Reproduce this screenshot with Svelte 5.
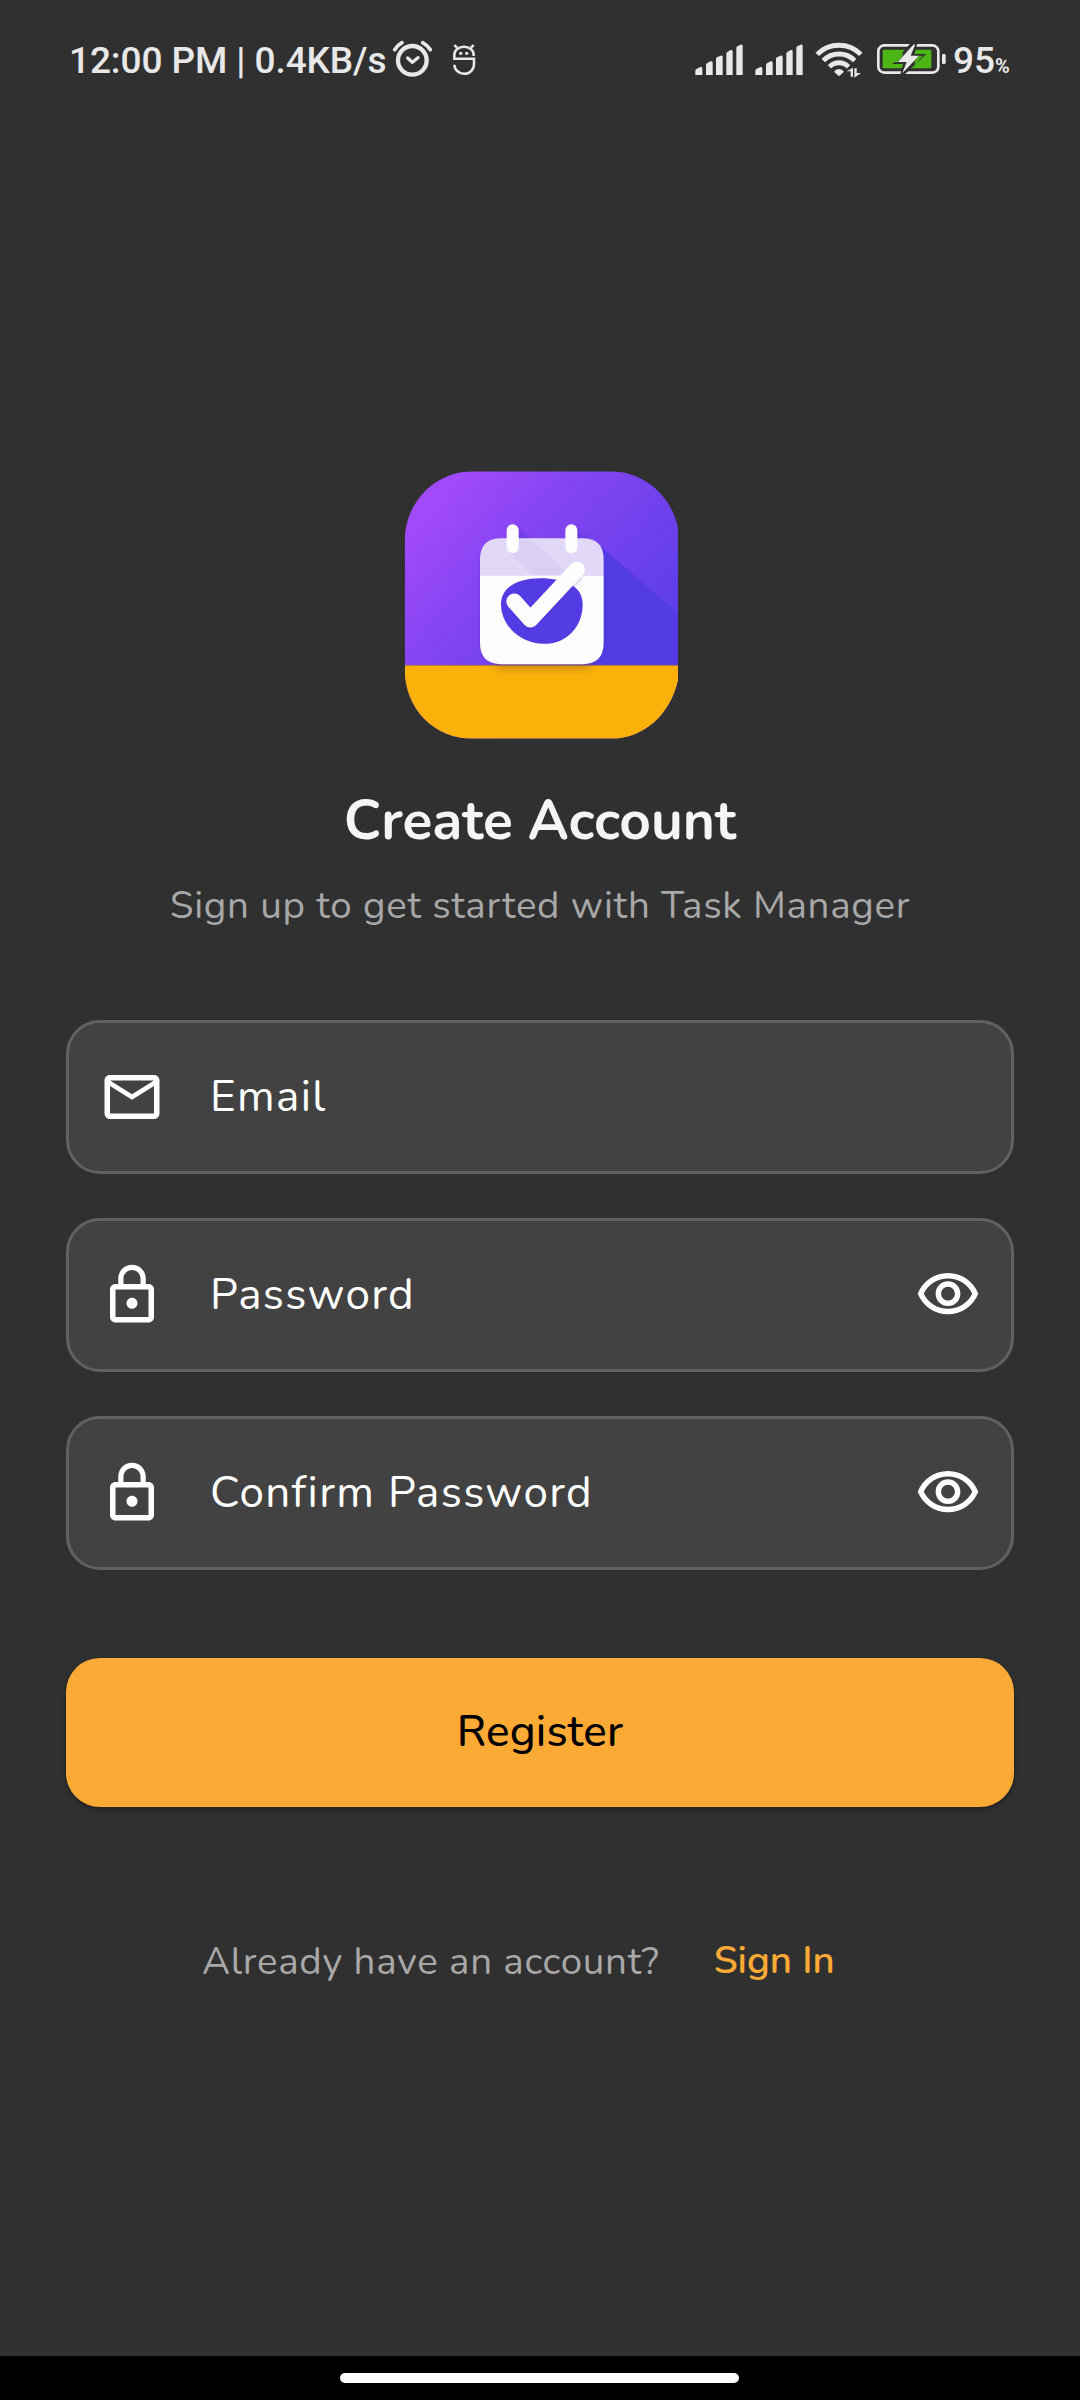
<script>
  const fields = [
    { label: 'Email', icon: 'mail', secret: false },
    { label: 'Password', icon: 'lock', secret: true },
    { label: 'Confirm Password', icon: 'lock', secret: true },
  ];

  const icons = {
    mail: 'M22 6c0-1.1-.9-2-2-2H4c-1.1 0-2 .9-2 2v12c0 1.1.9 2 2 2h16c1.1 0 2-.9 2-2V6zm-2 0l-8 5-8-5h16zm0 12H4V8l8 5 8-5v10z',
    lock: 'M12 17c1.1 0 2-.9 2-2s-.9-2-2-2-2 .9-2 2 .9 2 2 2zm6-9h-1V6c0-2.76-2.24-5-5-5S7 3.24 7 6v2H6c-1.1 0-2 .9-2 2v10c0 1.1.9 2 2 2h12c1.1 0 2-.9 2-2V10c0-1.1-.9-2-2-2zM8.9 6c0-1.71 1.39-3.1 3.1-3.1s3.1 1.39 3.1 3.1v2H8.9V6zM18 20H6V10h12v10z',
    eye: 'M12 6c3.79 0 7.17 2.13 8.82 5.5C19.17 14.87 15.79 17 12 17s-7.17-2.13-8.82-5.5C4.83 8.13 8.21 6 12 6m0-2C7 4 2.73 7.11 1 11.5 2.73 15.89 7 19 12 19s9.27-3.11 11-7.5C21.27 7.11 17 4 12 4zm0 5c1.38 0 2.5 1.12 2.5 2.5S13.38 14 12 14s-2.5-1.12-2.5-2.5S10.62 9 12 9m0-2c-2.48 0-4.5 2.02-4.5 4.5S9.52 16 12 16s4.5-2.02 4.5-4.5S14.48 7 12 7z',
  };
</script>

{#snippet signal()}
  <svg class="signal" viewBox="45 66 147 102">
    <path d="M46 165v-13q0-3 3-5l12-6q6-1 6 4v20zM78 165v-30q0-3 3-5l11-6q6-1 6 4v37zM108 165v-48q0-3 3-5l11-5q6-1 6 4v54zM139 165v-64q0-3 3-5l10-6q6-1 6 4v71zM169 165v-81q0-3 3-5l10-5q6-1 6 4v87z" />
  </svg>
{/snippet}

<div class="screen">
  <header class="status">
    <span class="clock">12:00 PM | 0.4KB/s</span>
    <svg class="alarm" viewBox="1026 60 126 114">
      <g fill="none" stroke="#e8e8e8" stroke-linecap="round" stroke-linejoin="round">
        <circle cx="1087" cy="121" r="43" stroke-width="13" />
        <path d="M1034 89q8-13 22-21M1118 68q14 8 23 21" stroke-width="11" />
        <path d="M1073 114l14 13 17-14" stroke-width="10" />
      </g>
    </svg>
    <svg class="buddy" viewBox="216 38 72 98">
      <path d="M281 77v-4a29 24 0 0 0-58 0v12h59v16a29 28 0 0 1-59 2M223 44l8 8M281 44l-8 8" fill="none" stroke="#e8e8e8" stroke-width="7.500" />
      <circle cx="242" cy="69" r="5" />
      <circle cx="260" cy="69" r="5" />
    </svg>
    <div class="system">
      {@render signal()}
      {@render signal()}
      <svg class="wifi" viewBox="405 66 144 108">
        <g fill="none" stroke="#e8e8e8" stroke-width="14.500">
          <path d="M411.5 103.2A92 92 0 0 1 542.500 103.200" />
          <path d="M430 122A65.500 65.500 0 0 1 524 122" />
          <path d="M448.500 140.500A39.500 39.500 0 0 1 505.500 140.500" />
        </g>
        <path d="M463 154q14-14 28 0v2l-12 11q-2 1-4 0l-12-11z" />
        <path d="M519 143v27h-7v-16h-12zM523 173v-28h7v14h13z" />
      </svg>
      <svg class="battery" viewBox="588 66 213 102">
        <rect x="595" y="76" width="180" height="82" rx="18" fill="none" stroke="#e8e8e8" stroke-width="8" />
        <rect x="608" y="89" width="146" height="56" rx="4" fill="#4db516" />
        <path d="M698 70l-50 57h27l-9 37 60-57h-29l10-37z" fill="#303030" stroke="#303030" stroke-width="10" />
        <path d="M640 127l28-30v30zM728 107h-24v28z" fill="#4db516" />
        <path d="M699 75l-45 51h26l-13 34 50-53h-25l14-34z" stroke="#303030" stroke-width="3" />
        <path d="M699 75l-45 51h26l-13 34 50-53h-25l14-34z" />
        <rect x="786" y="102" width="11" height="30" rx="4" />
      </svg>
      <span class="level">95<small>%</small></span>
    </div>
  </header>

  <main>
    <svg class="logo" viewBox="42 33 822 803">
      <defs>
        <linearGradient id="sky" gradientUnits="userSpaceOnUse" x1="100" y1="190" x2="640" y2="650">
          <stop offset="0" stop-color="#a04afa" />
          <stop offset="0.35" stop-color="#8545f1" />
          <stop offset="0.75" stop-color="#6e41ec" />
          <stop offset="1" stop-color="#603fe9" />
        </linearGradient>
        <clipPath id="tile">
          <path d="M250 33H660C760 33 845 105 864 205V660C840 765 760 836 660 836H250C135 836 44 750 44 625V245C44 125 135 33 250 33Z" />
        </clipPath>
        <filter id="soft" x="-30%" y="-30%" width="160%" height="160%">
          <feGaussianBlur stdDeviation="12" />
        </filter>
        <filter id="haze" x="-30%" y="-30%" width="160%" height="160%">
          <feGaussianBlur stdDeviation="5" />
        </filter>
      </defs>
      <g clip-path="url(#tile)">
        <rect x="44" y="33" width="820" height="803" fill="url(#sky)" />
        <path d="M632 258L870 465V616H600z" fill="#523ce2" />
        <path d="M382 200l50 50h-60zM558 202l60 50h-62z" fill="#5a37d6" opacity="0.5" filter="url(#haze)" />
        <rect x="44" y="616" width="820" height="220" fill="#fbb10a" />
        <rect x="44" y="614" width="820" height="3" fill="#a8784a" />
        <rect x="310" y="560" width="300" height="66" rx="30" fill="#7a4a20" opacity="0.4" filter="url(#soft)" />
        <rect x="268" y="248" width="376" height="362" rx="60" fill="#3c23b0" opacity="0.22" filter="url(#haze)" />
      </g>
      <path d="M270 346V298q0-64 64-64H577q64 0 64 64V346z" fill="#e2d8f7" />
      <path d="M352 270l76 76h112l-112-106h-42z" fill="#d3c6ee" opacity="0.4" />
      <path d="M270 345H641V548q0 64-64 64H334q-64 0-64-64z" fill="#fdfdfe" />
      <path d="M333 432C333 380 385 354 450 354C530 354 578 380 578 432C578 500 530 551 462 551C390 551 333 495 333 432Z" fill="#543ce4" />
      <path d="M376 434l46 54 143-148" fill="none" stroke="#3a2a90" stroke-width="36" opacity="0.2" filter="url(#haze)" />
      <path d="M373 424L421 478L561 328" fill="none" stroke="#fdfdfe" stroke-width="48" stroke-linecap="round" stroke-linejoin="round" />
      <rect x="350" y="192" width="36" height="87" rx="18" fill="#fdfdfe" />
      <rect x="526" y="192" width="36" height="87" rx="18" fill="#fdfdfe" />
    </svg>

    <h1>Create Account</h1>
    <p class="lead">Sign up to get started with Task Manager</p>

    <form>
      {#each fields as field}
        <div class="field">
          <svg class="glyph" viewBox="0 0 24 24"><path d={icons[field.icon]} /></svg>
          <span class="label">{field.label}</span>
          {#if field.secret}
            <svg class="glyph" viewBox="0 0 24 24"><path d={icons.eye} /></svg>
          {/if}
        </div>
      {/each}
      <button type="button">Register</button>
    </form>

    <div class="switch">
      <span>Already have an account?</span>
      <span class="signin">Sign In</span>
    </div>
  </main>

  <footer><div class="pill"></div></footer>
</div>

<style>
  :global(body) {
    margin: 0;
    background: #303030;
  }
  .screen {
    width: 1080px;
    height: 2400px;
    display: flex;
    flex-direction: column;
    background: #303030;
    font-family: Nunito, Lato, sans-serif;
    overflow: hidden;
  }
  svg {
    display: block;
    flex: none;
  }

  .status {
    box-sizing: border-box;
    height: 120px;
    flex: none;
    display: flex;
    align-items: flex-start;
    padding: 38px 69px 0 69px;
    color: #e8e8e8;
    font: 500 37px/44px Roboto, sans-serif;
  }
  .status svg {
    fill: #e8e8e8;
  }
  .clock {
    width: 323px;
    margin-top: 1px;
    letter-spacing: -0.1px;
    white-space: nowrap;
  }
  .alarm {
    width: 42px;
    height: 38px;
    margin-top: 2px;
  }
  .buddy {
    width: 24px;
    height: 32.7px;
    margin: 5px 0 0 18px;
  }
  .system {
    display: flex;
    align-items: flex-start;
    margin-left: auto;
  }
  .system svg {
    margin-top: 4px;
  }
  .signal {
    width: 49px;
    height: 34px;
    margin-right: 11px;
  }
  .wifi {
    width: 48px;
    height: 36px;
    margin-right: 13px;
  }
  .battery {
    width: 71px;
    height: 34px;
    margin-right: 6px;
  }
  .level {
    width: 58px;
    margin-top: 1px;
    white-space: nowrap;
  }
  .level small {
    font-size: 20px;
    font-weight: 700;
  }

  main {
    flex: 1;
    display: flex;
    flex-direction: column;
    align-items: center;
    padding: 351px 66px 0;
  }
  .logo {
    width: 274px;
    height: 268px;
    margin-left: 2px;
  }
  h1 {
    margin: 44px 0 0;
    color: #f5f5f7;
    font-size: 55px;
    font-weight: 700;
    line-height: 75px;
  }
  .lead {
    margin: 21px 0 0;
    color: #a8a8a8;
    font-size: 38.5px;
    line-height: 53px;
    letter-spacing: 0.69px;
  }

  form {
    align-self: stretch;
    display: flex;
    flex-direction: column;
    gap: 44px;
    margin-top: 88px;
  }
  .field {
    box-sizing: border-box;
    height: 154px;
    display: flex;
    align-items: center;
    padding: 0 30px;
    border: 3px solid #616161;
    border-radius: 34px;
    background: #424242;
    color: #fff;
  }
  .glyph {
    width: 66px;
    height: 66px;
    fill: #fff;
  }
  .label {
    flex: 1;
    margin-left: 45px;
    font-size: 44px;
    line-height: 60px;
    letter-spacing: 1.35px;
  }
  button {
    height: 149px;
    margin-top: 44px;
    padding: 0 0 2px;
    border: 0;
    border-radius: 34px;
    background: #fbaa35;
    box-shadow: 0 2px 5px rgba(0, 0, 0, 0.35);
    color: #000;
    font: 500 44px/60px Nunito, Lato, sans-serif;
    letter-spacing: 0.15px;
  }

  .switch {
    align-self: stretch;
    display: flex;
    align-items: flex-start;
    gap: 54px;
    margin-top: 128px;
    padding-left: 136px;
    color: #a8a8a8;
    font-size: 38.5px;
    line-height: 53px;
    letter-spacing: 0.69px;
    white-space: nowrap;
  }
  .signin {
    margin-top: -1px;
    color: #fbaa35;
    font-weight: 600;
    letter-spacing: 0;
  }

  footer {
    height: 44px;
    flex: none;
    display: flex;
    justify-content: center;
    align-items: center;
    background: #000;
  }
  .pill {
    width: 399px;
    height: 10px;
    margin-right: 2px;
    border-radius: 5px;
    background: #fff;
  }
</style>
